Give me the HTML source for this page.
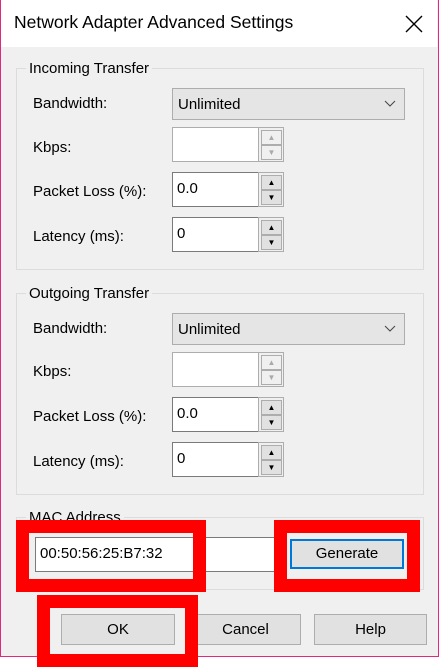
<!DOCTYPE html>
<html><head><style>
*{box-sizing:border-box;margin:0;padding:0}
body{width:440px;height:667px;background:#fff;position:relative;overflow:hidden;font-family:"Liberation Sans",sans-serif;font-size:15px;color:#000}
.a{position:absolute}
.win{left:0;top:0;width:439px;height:657px;border:1.5px solid #e0287f;border-top:none;background:#f0f0f0}
.title{left:1px;top:0;width:436px;height:47px;background:#fff}
.grp{border:1px solid #dcdcdc}
.lbl{background:#f0f0f0;padding:0 3px}
.combo{background:#e5e5e5;border:1px solid #adadad;padding:7px 5px}
.box{background:#fff;border:1px solid #7a7a7a;border-right:none;padding:7px 4px}
.spin{width:26px;border:1px solid #adadad;background:#f0f0f0}
.spin div{position:absolute;left:2px;width:21px;height:15px;background:#e1e1e1;border:1px solid #adadad;font-size:8px;text-align:center;line-height:13px}
.btn{background:#e1e1e1;border:1px solid #adadad;text-align:center;line-height:29px}
.red{border:13px solid #f00}
</style></head><body>
<div class="a win"></div>
<div class="a title"></div>
<div class="a" style="left:14px;top:12px;font-size:17.5px">Network Adapter Advanced Settings</div>
<svg class="a" style="left:405px;top:15px" width="18" height="18"><path d="M1 1L17 17M17 1L1 17" stroke="#000" stroke-width="1.4"/></svg>

<div class="a grp" style="left:16px;top:68px;width:408px;height:202px"></div>
<div class="a lbl" style="left:26px;top:60px">Incoming Transfer</div>
<div class="a" style="left:33px;top:95px">Bandwidth:</div>
<div class="a combo" style="left:172px;top:88px;width:233px;height:32px">Unlimited</div>
<svg class="a" style="left:384px;top:100px" width="12" height="8"><path d="M1 1L6 6L11 1" stroke="#444" fill="none"/></svg>
<div class="a" style="left:33px;top:139px">Kbps:</div>
<div class="a box" style="left:172px;top:127px;width:86px;height:35px;border-color:#adadad"></div>
<div class="a spin" style="left:258px;top:127px;height:35px"><div style="top:2px;color:#aaa;background:#f0f0f0">▲</div><div style="top:17px;color:#aaa;background:#f0f0f0">▼</div></div>
<div class="a" style="left:33px;top:183px">Packet Loss (%):</div>
<div class="a box" style="left:172px;top:172px;width:86px;height:35px">0.0</div>
<div class="a spin" style="left:258px;top:172px;height:35px"><div style="top:2px">▲</div><div style="top:17px">▼</div></div>
<div class="a" style="left:33px;top:228px">Latency (ms):</div>
<div class="a box" style="left:172px;top:217px;width:86px;height:35px">0</div>
<div class="a spin" style="left:258px;top:217px;height:35px"><div style="top:2px">▲</div><div style="top:17px">▼</div></div>

<div class="a grp" style="left:16px;top:293px;width:408px;height:202px"></div>
<div class="a lbl" style="left:26px;top:285px">Outgoing Transfer</div>
<div class="a" style="left:33px;top:320px">Bandwidth:</div>
<div class="a combo" style="left:172px;top:313px;width:233px;height:32px">Unlimited</div>
<svg class="a" style="left:384px;top:325px" width="12" height="8"><path d="M1 1L6 6L11 1" stroke="#444" fill="none"/></svg>
<div class="a" style="left:33px;top:363px">Kbps:</div>
<div class="a box" style="left:172px;top:352px;width:86px;height:35px;border-color:#adadad"></div>
<div class="a spin" style="left:258px;top:352px;height:35px"><div style="top:2px;color:#aaa;background:#f0f0f0">▲</div><div style="top:17px;color:#aaa;background:#f0f0f0">▼</div></div>
<div class="a" style="left:33px;top:408px">Packet Loss (%):</div>
<div class="a box" style="left:172px;top:397px;width:86px;height:35px">0.0</div>
<div class="a spin" style="left:258px;top:397px;height:35px"><div style="top:2px">▲</div><div style="top:17px">▼</div></div>
<div class="a" style="left:33px;top:453px">Latency (ms):</div>
<div class="a box" style="left:172px;top:442px;width:86px;height:35px">0</div>
<div class="a spin" style="left:258px;top:442px;height:35px"><div style="top:2px">▲</div><div style="top:17px">▼</div></div>

<div class="a grp" style="left:16px;top:517px;width:408px;height:73px"></div>
<div class="a lbl" style="left:26px;top:509px">MAC Address</div>
<div class="a box" style="left:35px;top:537px;width:240px;height:35px;border-right:1px solid #7a7a7a;padding:7px 4px">00:50:56:25:B7:32</div>
<div class="a btn" style="left:290px;top:539px;width:114px;height:30px;border:2px solid #0078d7;line-height:26px">Generate</div>

<div class="a btn" style="left:61px;top:614px;width:114px;height:31px">OK</div>
<div class="a btn" style="left:190px;top:614px;width:111px;height:31px">Cancel</div>
<div class="a btn" style="left:314px;top:614px;width:113px;height:31px">Help</div>

<div class="a red" style="left:16px;top:520px;width:190px;height:72px"></div>
<div class="a red" style="left:274px;top:520px;width:146px;height:72px"></div>
<div class="a red" style="left:37px;top:595px;width:161px;height:72px"></div>
</body></html>
